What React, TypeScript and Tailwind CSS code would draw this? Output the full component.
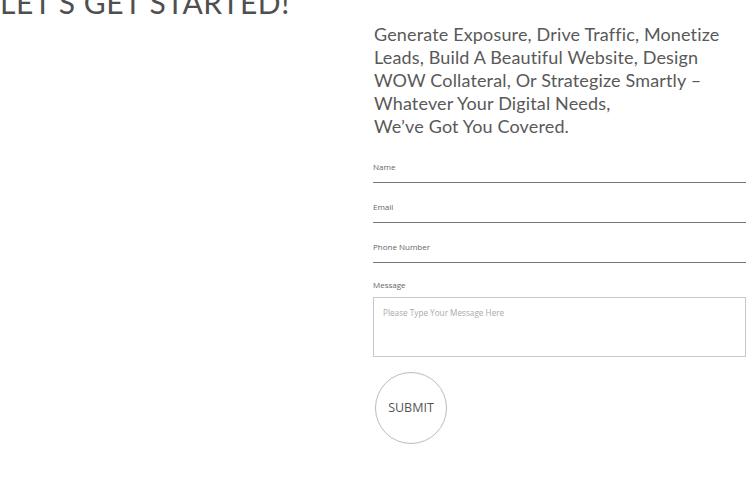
const fields = ['Name', 'Email', 'Phone Number'];

export default function App() {
  return (
    <div className="w-[750px] h-[500px] overflow-hidden bg-white text-[#555] font-['Lato',sans-serif]">
      <div className="flex">
        <div className="w-[373px] shrink-0">
          <h1 className="-mt-[16px] text-[30px] leading-[36px] tracking-[0.5px] whitespace-nowrap text-[#4f4f4f]">
            LET’S GET STARTED!
          </h1>
        </div>

        <div className="w-[373px] shrink-0">
          <p className="pt-[23px] pl-[1px] text-[18px] leading-[23px] tracking-[0.15px] whitespace-nowrap text-[#595959]">
            Generate Exposure, Drive Traffic, Monetize
            <br />
            Leads, Build A Beautiful Website, Design
            <br />
            WOW Collateral, Or Strategize Smartly –
            <br />
            Whatever Your Digital Needs,
            <br />
            We’ve Got You Covered.
          </p>

          <form className="mt-[6px] font-['Open_Sans',sans-serif]">
            {fields.map((f) => (
              <div
                key={f}
                className="h-[40px] first:h-[39px] flex flex-col justify-end border-b-[1.5px] border-[#777]"
              >
                <label className="pb-[10px] text-[8px] leading-[10px] text-[#666]">{f}</label>
              </div>
            ))}

            <label className="block mt-[17px] text-[8px] leading-[10px] text-[#666]">Message</label>
            <div className="mt-[7px] h-[60px] border border-[#c8c8c8] px-[9px] pt-[9px]">
              <span className="block text-[8.2px] leading-[12px] text-[#aaa]">
                Please Type Your Message Here
              </span>
            </div>

            <button
              type="button"
              className="mt-[15px] ml-[2px] w-[72px] h-[72px] rounded-full border border-[#bbb] text-[12.5px] text-[#555] bg-white"
            >
              SUBMIT
            </button>
          </form>
        </div>
      </div>
    </div>
  );
}
